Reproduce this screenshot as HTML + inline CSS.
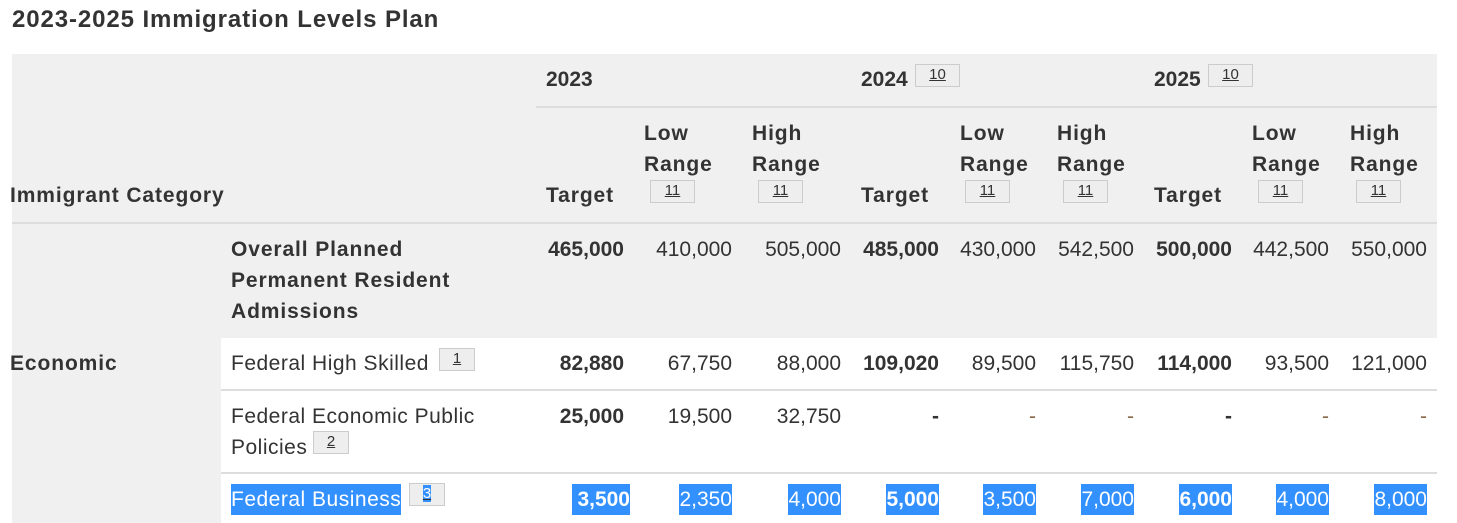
<!DOCTYPE html>
<html><head><meta charset="utf-8"><style>
body{margin:0;width:1457px;height:523px;background:#fff;position:relative;overflow:hidden;font-family:"Liberation Sans",sans-serif;color:#333;font-size:21px}
div,span{position:absolute}
.t{line-height:31px;white-space:nowrap}
.l{letter-spacing:0.9px}
.lr{letter-spacing:0.5px}
.b{font-weight:bold}
.fn{background:#eee;border:1px solid #ccc;font-size:15px;line-height:20px;text-align:center;color:#333;text-decoration:underline;box-sizing:border-box;height:23px}
.hl{background:#3390ff;color:#fff}
.line{background:#ddd;height:2px}
</style></head><body>
<div class="t b" style="left:12px;top:4px;font-size:24px;letter-spacing:0.9px">2023-2025 Immigration Levels Plan</div>
<div style="left:12px;top:54px;width:1425px;height:469px;background:#f0f0f0"></div>
<div style="left:221px;top:338px;width:1216px;height:185px;background:#fff"></div>
<div class="line" style="left:536px;top:106px;width:901px"></div>
<div class="line" style="left:12px;top:222px;width:1425px"></div>
<div class="line" style="left:221px;top:389px;width:1216px"></div>
<div class="line" style="left:221px;top:472px;width:1216px"></div>

<div class="t b" style="left:546px;top:64px">2023</div>
<div class="t b" style="left:861px;top:64px">2024</div><div class="fn" style="left:915px;top:64px;width:45px">10</div>
<div class="t b" style="left:1154px;top:64px">2025</div><div class="fn" style="left:1208px;top:64px;width:45px">10</div>

<div class="t b l" style="left:10px;top:180px">Immigrant Category</div>
<div class="t b l" style="left:546px;top:180px">Target</div>
<div class="t b l" style="left:861px;top:180px">Target</div>
<div class="t b l" style="left:1154px;top:180px">Target</div>
<div class="t b l" style="left:644px;top:118px">Low<br>Range</div><div class="fn" style="left:650px;top:180px;width:45px">11</div>
<div class="t b l" style="left:752px;top:118px">High<br>Range</div><div class="fn" style="left:758px;top:180px;width:45px">11</div>
<div class="t b l" style="left:960px;top:118px">Low<br>Range</div><div class="fn" style="left:965px;top:180px;width:45px">11</div>
<div class="t b l" style="left:1057px;top:118px">High<br>Range</div><div class="fn" style="left:1063px;top:180px;width:45px">11</div>
<div class="t b l" style="left:1252px;top:118px">Low<br>Range</div><div class="fn" style="left:1258px;top:180px;width:45px">11</div>
<div class="t b l" style="left:1350px;top:118px">High<br>Range</div><div class="fn" style="left:1356px;top:180px;width:45px">11</div>

<div class="t b l" style="left:231px;top:234px">Overall Planned<br>Permanent Resident<br>Admissions</div>
<div class="t b" style="right:833px;top:234px">465,000</div>
<div class="t" style="right:725px;top:234px">410,000</div>
<div class="t" style="right:616px;top:234px">505,000</div>
<div class="t b" style="right:518px;top:234px">485,000</div>
<div class="t" style="right:421px;top:234px">430,000</div>
<div class="t" style="right:323px;top:234px">542,500</div>
<div class="t b" style="right:225px;top:234px">500,000</div>
<div class="t" style="right:128px;top:234px">442,500</div>
<div class="t" style="right:30px;top:234px">550,000</div>

<div class="t b l" style="left:10px;top:348px">Economic</div>
<div class="t lr" style="left:231px;top:348px">Federal High Skilled</div><div class="fn" style="left:439px;top:348px;width:36px">1</div>
<div class="t b" style="right:833px;top:348px">82,880</div>
<div class="t" style="right:725px;top:348px">67,750</div>
<div class="t" style="right:616px;top:348px">88,000</div>
<div class="t b" style="right:518px;top:348px">109,020</div>
<div class="t" style="right:421px;top:348px">89,500</div>
<div class="t" style="right:323px;top:348px">115,750</div>
<div class="t b" style="right:225px;top:348px">114,000</div>
<div class="t" style="right:128px;top:348px">93,500</div>
<div class="t" style="right:30px;top:348px">121,000</div>

<div class="t lr" style="left:231px;top:401px">Federal Economic Public<br>Policies</div><div class="fn" style="left:313px;top:431px;width:36px">2</div>
<div class="t b" style="right:833px;top:401px">25,000</div>
<div class="t" style="right:725px;top:401px">19,500</div>
<div class="t" style="right:616px;top:401px">32,750</div>
<div class="t b" style="right:518px;top:401px">-</div>
<div class="t" style="right:421px;top:401px;color:#8a6a4a">-</div>
<div class="t" style="right:323px;top:401px;color:#8a6a4a">-</div>
<div class="t b" style="right:225px;top:401px">-</div>
<div class="t" style="right:128px;top:401px;color:#8a6a4a">-</div>
<div class="t" style="right:30px;top:401px;color:#8a6a4a">-</div>

<div class="t hl lr" style="left:231px;top:484px">Federal Business</div><div class="fn" style="left:409px;top:483px;width:36px"><span class="hl" style="position:static">3</span></div>
<div class="t b hl" style="right:827px;top:484px;padding-left:5px">3,500</div>
<div class="t hl" style="right:725px;top:484px">2,350</div>
<div class="t hl" style="right:616px;top:484px">4,000</div>
<div class="t b hl" style="right:518px;top:484px">5,000</div>
<div class="t hl" style="right:421px;top:484px">3,500</div>
<div class="t hl" style="right:323px;top:484px">7,000</div>
<div class="t b hl" style="right:225px;top:484px">6,000</div>
<div class="t hl" style="right:128px;top:484px">4,000</div>
<div class="t hl" style="right:30px;top:484px">8,000</div>
</body></html>
